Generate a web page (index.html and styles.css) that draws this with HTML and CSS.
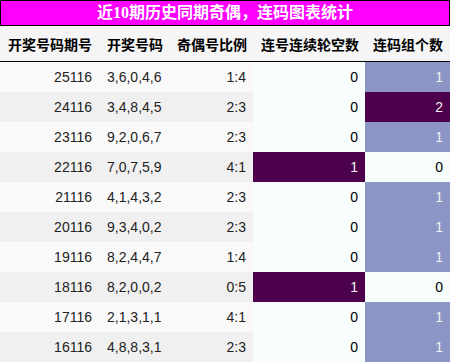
FILE: index.html
```html
<!DOCTYPE html>
<html lang="zh">
<head>
<meta charset="utf-8">
<link rel="stylesheet" href="styles.css">
</head>
<body>
<div class="title">近10期历史同期奇偶，连码图表统计</div>
<table class="stats">
  <colgroup>
    <col class="c1"><col class="c2"><col class="c3"><col class="c4"><col class="c5">
  </colgroup>
  <thead>
    <tr><th>开奖号码期号</th><th>开奖号码</th><th>奇偶号比例</th><th>连号连续轮空数</th><th>连码组个数</th></tr>
  </thead>
  <tbody>
    <tr><td>25116</td><td>3,6,0,4,6</td><td>1:4</td><td class="v0">0</td><td class="v1">1</td></tr>
    <tr><td>24116</td><td>3,4,8,4,5</td><td>2:3</td><td class="v0">0</td><td class="v2">2</td></tr>
    <tr><td>23116</td><td>9,2,0,6,7</td><td>2:3</td><td class="v0">0</td><td class="v1">1</td></tr>
    <tr><td>22116</td><td>7,0,7,5,9</td><td>4:1</td><td class="v2">1</td><td class="v0">0</td></tr>
    <tr><td>21116</td><td>4,1,4,3,2</td><td>2:3</td><td class="v0">0</td><td class="v1">1</td></tr>
    <tr><td>20116</td><td>9,3,4,0,2</td><td>2:3</td><td class="v0">0</td><td class="v1">1</td></tr>
    <tr><td>19116</td><td>8,2,4,4,7</td><td>1:4</td><td class="v0">0</td><td class="v1">1</td></tr>
    <tr><td>18116</td><td>8,2,0,0,2</td><td>0:5</td><td class="v2">1</td><td class="v0">0</td></tr>
    <tr><td>17116</td><td>2,1,3,1,1</td><td>4:1</td><td class="v0">0</td><td class="v1">1</td></tr>
    <tr><td>16116</td><td>4,8,8,3,1</td><td>2:3</td><td class="v0">0</td><td class="v1">1</td></tr>
  </tbody>
</table>
</body>
</html>
```
FILE: styles.css
```css
html, body {
  margin: 0;
  padding: 0;
  background: #ffffff;
}
body {
  width: 450px;
  font-family: "Liberation Sans", "Noto Sans CJK SC", sans-serif;
  color: #222222;
}
.title {
  box-sizing: border-box;
  height: 26px;
  border: 1px solid #000000;
  background: #ff00ff;
  color: #ffffff;
  font-family: "Liberation Serif", "Noto Sans CJK SC", serif;
  font-weight: bold;
  font-size: 16px;
  line-height: 24px;
  text-align: center;
}
.stats {
  width: 450px;
  border-collapse: collapse;
  table-layout: fixed;
}
.c1 { width: 99px; }
.c2 { width: 70px; }
.c3 { width: 84px; }
.c4 { width: 112px; }
.c5 { width: 85px; }
.stats th {
  height: 35px;
  padding: 0 7px 0 8px;
  background: #f5f5f5;
  border-bottom: 1px solid #000000;
  font-family: "Noto Sans CJK SC", sans-serif;
  font-size: 14px;
  font-weight: bold;
  color: #000000;
  text-align: left;
  white-space: nowrap;
  overflow: hidden;
}
.stats td {
  height: 30px;
  padding: 0 7px 0 0;
  font-size: 14px;
  text-align: right;
  white-space: nowrap;
}
.stats td:nth-child(2) {
  text-align: left;
  padding-left: 8px;
}
.stats tbody tr:nth-child(odd) td { background: #f9f9f9; }
.stats tbody tr:nth-child(even) td { background: #f0f0f0; }
.stats tbody tr td.v0 { background: #f7fcfd; color: #000000; }
.stats tbody tr td.v1 { background: #8c96c6; color: #f1f1f1; }
.stats tbody tr td.v2 { background: #4d004b; color: #f1f1f1; }
```
